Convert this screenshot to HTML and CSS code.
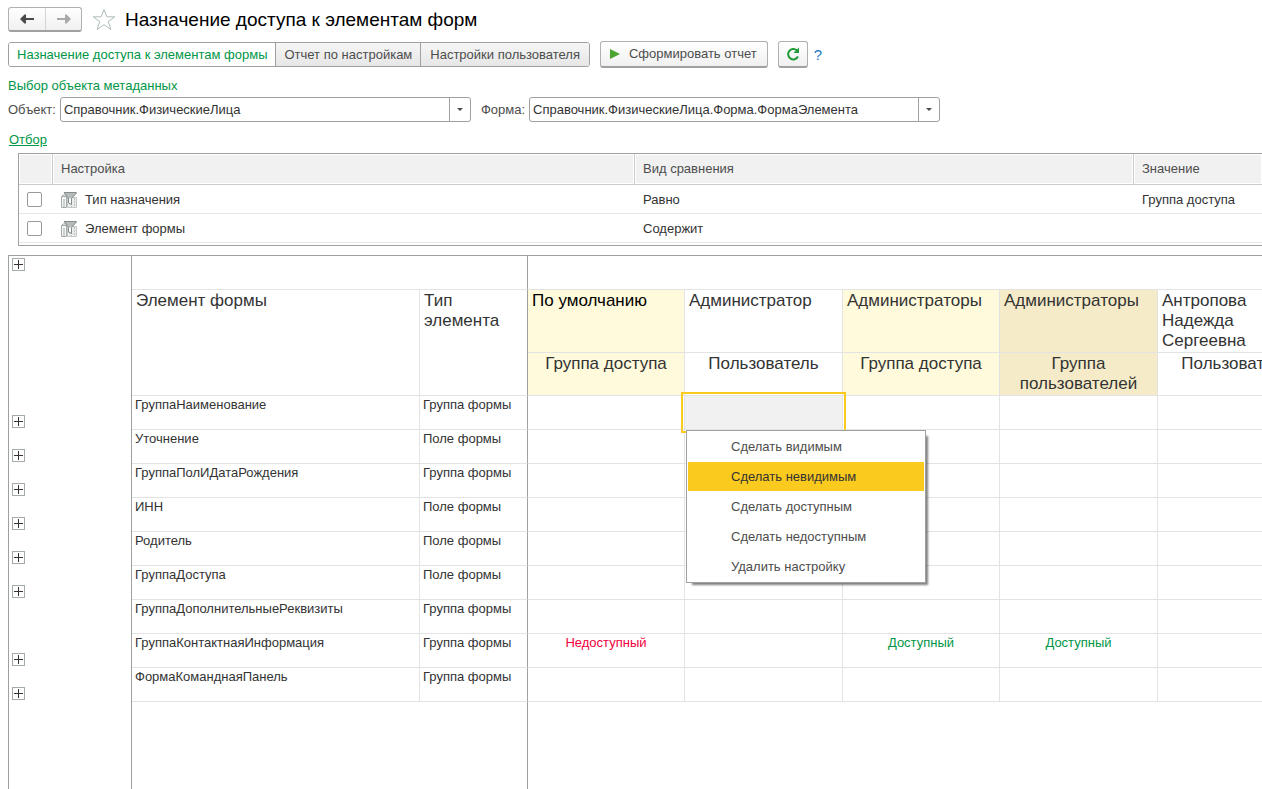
FILE: index.html
```html
<!DOCTYPE html>
<html lang="ru">

<head>
    <meta charset="UTF-8">
    <meta name="viewport" content="width=device-width, initial-scale=1.0">
    <title>Назначение доступа к элементам форм</title>
    <link rel="stylesheet" href="styles.css">
</head>

<body>
    <!-- Shared icons -->
    <svg class="sprite" aria-hidden="true">
        <symbol id="icon-field" viewBox="0 0 16 16">
            <path d="M6.500 5.500h9v10h-9z" fill="#e9eceb" stroke="#c3c9c7" />
            <path d="M10.500 11v4M13.500 6v9" stroke="#b9bfbd" stroke-dasharray="2 1" />
            <path d="M0.500 4.500h5v11h-5z" fill="#f4f6f5" stroke="#a5abab" />
            <path d="M0.500 4.500L2 3h3.500M3 7v8" fill="none" stroke="#a5abab" />
            <path d="M2.500 0.500h13.500L10.500 6.500v6L7.500 11V6.500z" fill="#b6bcbb" />
            <path d="M3 0.500h12.500M3.500 1L7.500 6.500v4.500l3 1.500v-6L15.500 1" fill="none" stroke="#858d8b" />
            <path d="M8 6.500h2v5l-2-1z" fill="#fff" />
        </symbol>
        <symbol id="icon-plus" viewBox="0 0 13 13">
            <rect x="0.5" y="0.5" width="12" height="12" fill="#fff" stroke="#a3acaa" />
            <path d="M2 6.500h9M6.500 2v9" stroke="#333" />
        </symbol>
    </svg>

    <main class="page">
        <header class="title-bar">
            <div class="history">
                <button type="button" aria-label="Назад">
                    <svg width="14" height="10" viewBox="0 0 14 10"><path d="M14 4v2H6v3.500H4.500L0 5 4.500 0.500H6V4z" fill="#4a4a4a" /></svg>
                </button>
                <button type="button" aria-label="Вперед">
                    <svg width="14" height="10" viewBox="0 0 14 10"><path d="M0 4v2h8v3.500h1.500L14 5 9.500 0.500H8V4z" fill="#a9a9a9" /></svg>
                </button>
            </div>
            <button type="button" class="star" aria-label="Избранное">
                <svg width="24" height="23" viewBox="0 0 24 23"><path d="M12 1.500l2.800 7.300h8l-6.500 4.800 2.500 7.900-6.800-4.900-6.800 4.900 2.500-7.900L1.200 8.800h8z" fill="#fff" stroke="#b0bcbc" /></svg>
            </button>
            <h1>Назначение доступа к элементам форм</h1>
        </header>

        <div class="toolbar">
            <div class="tabs">
                <button type="button" class="active">Назначение доступа к элементам формы</button>
                <button type="button">Отчет по настройкам</button>
                <button type="button">Настройки пользователя</button>
            </div>
            <button type="button" class="btn btn-run">
                <svg width="10" height="10" viewBox="0 0 10 10"><path d="M0 0l10 5-10 5z" fill="#4da32f" /></svg>
                Сформировать отчет
            </button>
            <button type="button" class="btn btn-refresh" aria-label="Обновить">
                <svg width="14" height="14" viewBox="0 0 14 14"><path d="M12 9.500A5.200 5.200 0 1 1 10.800 3.300" fill="none" stroke="#1f9a35" stroke-width="2" /><path d="M13 0.500v5.500H7.500z" fill="#1f9a35" /></svg>
            </button>
            <a href="#" class="help">?</a>
        </div>

        <h2>Выбор объекта метаданных</h2>
        <div class="fields">
            <label for="object">Объект:</label>
            <div class="combo">
                <select id="object"><option>Справочник.ФизическиеЛица</option></select>
            </div>
            <label for="form">Форма:</label>
            <div class="combo">
                <select id="form"><option>Справочник.ФизическиеЛица.Форма.ФормаЭлемента</option></select>
            </div>
        </div>

        <a href="#" class="filter-link">Отбор</a>
        <div class="filter">
            <table>
                <colgroup>
                    <col class="col-check">
                    <col class="col-setting">
                    <col class="col-compare">
                    <col>
                </colgroup>
                <thead>
                    <tr>
                        <th></th>
                        <th>Настройка</th>
                        <th>Вид сравнения</th>
                        <th>Значение</th>
                    </tr>
                </thead>
                <tbody>
                    <tr>
                        <td><input type="checkbox" id="f1"></td>
                        <td><label for="f1"><svg width="16" height="16"><use href="#icon-field" /></svg>Тип назначения</label></td>
                        <td>Равно</td>
                        <td>Группа доступа</td>
                    </tr>
                    <tr>
                        <td><input type="checkbox" id="f2"></td>
                        <td><label for="f2"><svg width="16" height="16"><use href="#icon-field" /></svg>Элемент формы</label></td>
                        <td>Содержит</td>
                        <td></td>
                    </tr>
                </tbody>
            </table>
        </div>

        <!-- Access report -->
        <div class="report">
            <table>
                <colgroup>
                    <col class="col-tree">
                    <col class="col-element">
                    <col class="col-type">
                    <col class="col-odd">
                    <col class="col-even">
                    <col class="col-odd">
                    <col class="col-even">
                    <col class="col-even">
                </colgroup>
                <thead>
                    <tr class="band">
                        <td class="tree"><button type="button" class="expand" aria-label="Развернуть"><svg width="13" height="13"><use href="#icon-plus" /></svg></button></td>
                        <td colspan="2" class="fixed-edge"></td>
                        <td colspan="5"></td>
                    </tr>
                    <tr class="names">
                        <td class="tree"></td>
                        <th rowspan="2">Элемент формы</th>
                        <th rowspan="2" class="fixed-edge">Тип элемента</th>
                        <th class="group default">По умолчанию</th>
                        <th>Администратор</th>
                        <th class="group">Администраторы</th>
                        <th class="user-group">Администраторы</th>
                        <th>Антропова Надежда Сергеевна</th>
                    </tr>
                    <tr class="kinds">
                        <td class="tree"></td>
                        <th class="group">Группа доступа</th>
                        <th>Пользователь</th>
                        <th class="group">Группа доступа</th>
                        <th class="user-group">Группа пользователей</th>
                        <th>Пользователь</th>
                    </tr>
                </thead>
                <tbody>
                    <tr>
                        <td class="tree"><button type="button" class="expand" aria-label="Развернуть"><svg width="13" height="13"><use href="#icon-plus" /></svg></button></td>
                        <td>ГруппаНаименование</td>
                        <td class="fixed-edge">Группа формы</td>
                        <td></td>
                        <td class="selected">
                            <div class="menu" role="menu">
                                <button type="button" role="menuitem">Сделать видимым</button>
                                <button type="button" role="menuitem" class="current">Сделать невидимым</button>
                                <button type="button" role="menuitem">Сделать доступным</button>
                                <button type="button" role="menuitem">Сделать недоступным</button>
                                <button type="button" role="menuitem">Удалить настройку</button>
                            </div>
                        </td>
                        <td></td>
                        <td></td>
                        <td></td>
                    </tr>
                    <tr>
                        <td class="tree"><button type="button" class="expand" aria-label="Развернуть"><svg width="13" height="13"><use href="#icon-plus" /></svg></button></td>
                        <td>Уточнение</td>
                        <td class="fixed-edge">Поле формы</td>
                        <td></td><td></td><td></td><td></td><td></td>
                    </tr>
                    <tr>
                        <td class="tree"><button type="button" class="expand" aria-label="Развернуть"><svg width="13" height="13"><use href="#icon-plus" /></svg></button></td>
                        <td>ГруппаПолИДатаРождения</td>
                        <td class="fixed-edge">Группа формы</td>
                        <td></td><td></td><td></td><td></td><td></td>
                    </tr>
                    <tr>
                        <td class="tree"><button type="button" class="expand" aria-label="Развернуть"><svg width="13" height="13"><use href="#icon-plus" /></svg></button></td>
                        <td>ИНН</td>
                        <td class="fixed-edge">Поле формы</td>
                        <td></td><td></td><td></td><td></td><td></td>
                    </tr>
                    <tr>
                        <td class="tree"><button type="button" class="expand" aria-label="Развернуть"><svg width="13" height="13"><use href="#icon-plus" /></svg></button></td>
                        <td>Родитель</td>
                        <td class="fixed-edge">Поле формы</td>
                        <td></td><td></td><td></td><td></td><td></td>
                    </tr>
                    <tr>
                        <td class="tree"><button type="button" class="expand" aria-label="Развернуть"><svg width="13" height="13"><use href="#icon-plus" /></svg></button></td>
                        <td>ГруппаДоступа</td>
                        <td class="fixed-edge">Поле формы</td>
                        <td></td><td></td><td></td><td></td><td></td>
                    </tr>
                    <tr>
                        <td class="tree"></td>
                        <td>ГруппаДополнительныеРеквизиты</td>
                        <td class="fixed-edge">Группа формы</td>
                        <td></td><td></td><td></td><td></td><td></td>
                    </tr>
                    <tr>
                        <td class="tree"><button type="button" class="expand" aria-label="Развернуть"><svg width="13" height="13"><use href="#icon-plus" /></svg></button></td>
                        <td>ГруппаКонтактнаяИнформация</td>
                        <td class="fixed-edge">Группа формы</td>
                        <td class="denied">Недоступный</td>
                        <td></td>
                        <td class="allowed">Доступный</td>
                        <td class="allowed">Доступный</td>
                        <td></td>
                    </tr>
                    <tr>
                        <td class="tree"><button type="button" class="expand" aria-label="Развернуть"><svg width="13" height="13"><use href="#icon-plus" /></svg></button></td>
                        <td>ФормаКоманднаяПанель</td>
                        <td class="fixed-edge">Группа формы</td>
                        <td></td><td></td><td></td><td></td><td></td>
                    </tr>
                    <tr class="rest">
                        <td class="tree"></td>
                        <td colspan="2" class="fixed-edge"></td>
                        <td colspan="5"></td>
                    </tr>
                </tbody>
            </table>
        </div>
    </main>
</body>

</html>
```
FILE: styles.css
```css
* {
    margin: 0;
    padding: 0;
    box-sizing: border-box;
}

body {
    font-family: "Liberation Sans", Arial, sans-serif;
    font-size: 13px;
    line-height: 16px;
    color: #333;
    background-color: #fff;
    overflow: hidden;
}

button,
select {
    font: inherit;
    color: inherit;
}

button {
    display: flex;
    align-items: center;
    justify-content: center;
    border: none;
    background: none;
    white-space: nowrap;
    cursor: pointer;
}

.sprite {
    display: none;
}

.page {
    display: flex;
    flex-direction: column;
    height: 100vh;
    padding: 7px 0 0 8px;
}

/* Title */
.title-bar {
    display: flex;
    align-items: center;
    height: 25px;
}

.history {
    display: flex;
    height: 25px;
    border: 1px solid #b0b0b0;
    border-bottom: 2px solid #a0a0a0;
    border-radius: 3px;
    background: linear-gradient(#fff, #f0f0f0);
}

.history button {
    width: 36px;
}

.history button + button {
    border-left: 1px solid #d4d4d4;
}

.star {
    margin: 0 9px 0 10px;
}

h1 {
    font-size: 19px;
    font-weight: normal;
    color: #000;
}

/* Toolbar */
.toolbar {
    display: flex;
    align-items: center;
    height: 27px;
    margin-top: 9px;
    color: #4d4d4d;
}

.tabs {
    display: flex;
    height: 25px;
    border: 1px solid #a0a0a0;
    border-radius: 3px;
    overflow: hidden;
}

.tabs button {
    padding: 0 8px;
    background: linear-gradient(#f6f6f6, #e6e6e6);
}

.tabs button + button {
    border-left: 1px solid #a0a0a0;
}

.tabs button:last-child {
    padding: 0 9px;
}

.tabs .active {
    background: #fff;
    color: #009646;
}

.btn {
    height: 27px;
    margin-left: 10px;
    border: 1px solid #b0b0b0;
    border-bottom: 2px solid #a0a0a0;
    border-radius: 3px;
    background: linear-gradient(#fff, #f0f0f0);
}

.btn-run {
    gap: 9px;
    padding: 0 10px 0 9px;
}

.btn-refresh {
    width: 30px;
}

.help {
    margin-left: 6px;
    font-size: 15px;
    color: #1a78c2;
    text-decoration: none;
}

/* Metadata object */
h2 {
    margin-top: 10px;
    font-size: 13px;
    font-weight: normal;
    color: #009646;
}

.fields {
    display: flex;
    align-items: center;
    height: 25px;
    margin-top: 3px;
    color: #4d4d4d;
}

.combo {
    position: relative;
    width: 411px;
    height: 25px;
    margin: 0 10px 0 4px;
}

.combo select {
    width: 100%;
    height: 100%;
    padding: 0 25px 0 3px;
    border: 1px solid #a0a0a0;
    border-radius: 3px;
    background: linear-gradient(#a0a0a0, #a0a0a0) right 20px top / 1px 100% no-repeat #fff;
    color: #333;
    appearance: none;
}

.combo::after {
    content: "";
    position: absolute;
    top: 11px;
    right: 8px;
    border: 3px solid transparent;
    border-top-color: #4d4d4d;
    border-bottom: none;
    pointer-events: none;
}

.filter-link {
    align-self: flex-start;
    margin: 10px 0 0 1px;
    color: #009646;
}

/* Filter */
.filter {
    height: 93px;
    margin: 5px 0 0 10px;
    border: 1px solid #a0a0a0;
    border-right: none;
}

table {
    width: 100%;
    table-layout: fixed;
    border-collapse: separate;
    border-spacing: 0;
}

th {
    font-weight: normal;
    text-align: left;
}

.col-check {
    width: 34px;
}

.col-setting {
    width: 582px;
}

.col-compare {
    width: 499px;
}

.filter th {
    height: 31px;
    padding-left: 8px;
    border-right: 1px solid #ccc;
    border-bottom: 1px solid #ccc;
    background-color: #f1f1f1;
    box-shadow: inset 0 0 0 1px #fff;
    color: #4d4d4d;
}

.filter th:last-child {
    border-right: none;
}

.filter td {
    height: 29px;
    padding: 1px 0 0 8px;
    border-bottom: 1px solid #e6e6e6;
}

.filter label {
    display: flex;
    align-items: center;
    gap: 8px;
}

.filter input {
    display: block;
    width: 15px;
    height: 15px;
    border: 1px solid #999;
    border-radius: 2px;
    background-color: #fff;
    appearance: none;
}

/* Report */
.report {
    flex: 1;
    min-height: 0;
    margin-top: 9px;
    border: 1px solid #a0a0a0;
    border-right: none;
    border-bottom: none;
    overflow: hidden;
}

.report table {
    height: 100%;
}

.col-tree {
    width: 123px;
}

.col-element {
    width: 288px;
}

.col-type {
    width: 108px;
}

.col-odd {
    width: 157px;
}

.col-even {
    width: 158px;
}

.report td,
.report th {
    border-right: 1px solid #e3e3e3;
    border-bottom: 1px solid #e3e3e3;
    vertical-align: top;
}

.report td {
    height: 34px;
    padding-left: 3px;
    line-height: 18px;
}

.report th {
    padding: 1px 4px 0;
    font-size: 17px;
    line-height: 20px;
}

.report .names th {
    height: 63px;
}

.report .kinds th {
    height: 43px;
    text-align: center;
}

.report .names td,
.report .kinds td {
    height: auto;
}

.report .tree {
    padding: 0 0 2px 3px;
    border-right-color: #a0a0a0;
    border-bottom: none;
    vertical-align: bottom;
}

.report .band .tree {
    padding-top: 2px;
    vertical-align: top;
}

.report .fixed-edge {
    border-right-color: #a0a0a0;
}

.report .rest td {
    height: auto;
    border-bottom: none;
}

.report .group {
    background-color: #fffadc;
}

.report .user-group {
    background-color: #f5ebc8;
}

.report .default {
    color: #000;
}

.report .denied {
    text-align: center;
    color: #f0003c;
}

.report .allowed {
    text-align: center;
    color: #009646;
}

.report .denied,
.report .allowed {
    padding-left: 0;
}

.report .selected {
    position: relative;
    background-color: #f1f1f1;
}

.selected::after {
    content: "";
    position: absolute;
    inset: -4px;
    border: 2px solid #fbca1e;
}

/* Context menu */
.menu {
    position: absolute;
    top: 34px;
    left: 1px;
    z-index: 1;
    display: flex;
    flex-direction: column;
    gap: 1px;
    width: 240px;
    padding: 1px;
    border: 1px solid #a0a0a0;
    background-color: #fff;
    box-shadow: 4px 4px 2px -2px rgba(0, 0, 0, 0.5);
    color: #4d4d4d;
}

.menu button {
    height: 29px;
    padding-left: 43px;
    justify-content: flex-start;
}

.menu .current {
    background-color: #fbca1e;
    color: #333;
}
```
